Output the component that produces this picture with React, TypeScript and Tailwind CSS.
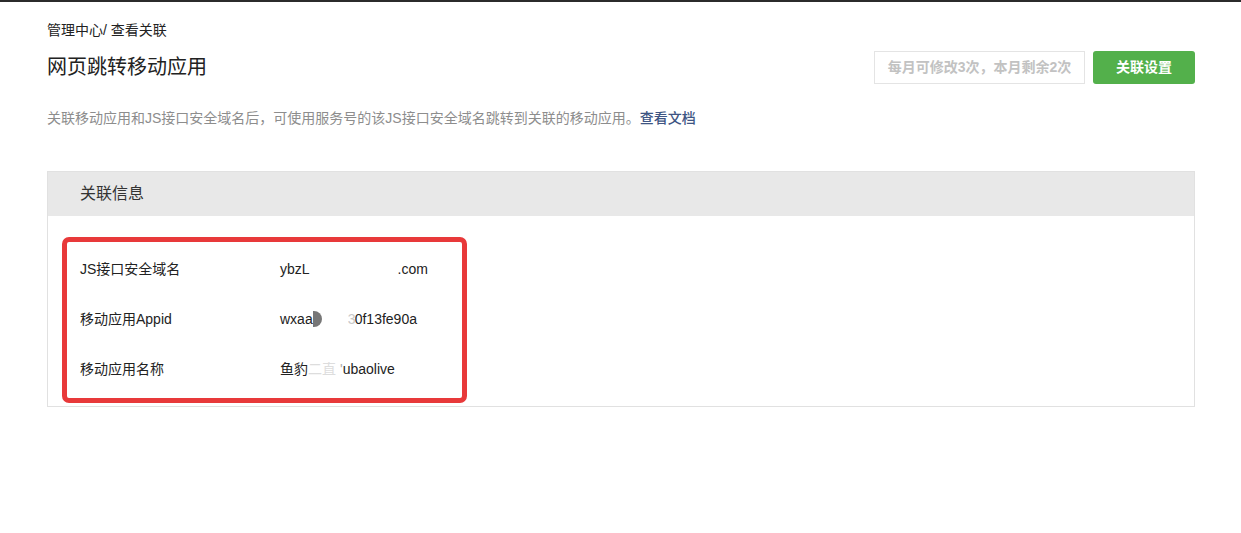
const rows = [
  { label: 'JS接口安全域名', value: 'domain' },
  { label: '移动应用Appid', value: 'appid' },
  { label: '移动应用名称', value: 'name' },
]

function Value({ kind }: { kind: string }) {
  if (kind === 'domain') {
    return (
      <span className="flex items-center">
        <span>ybzL</span>
        <span className="inline-block w-[88px]" />
        <span>.com</span>
      </span>
    )
  }
  if (kind === 'appid') {
    return (
      <span className="flex items-center">
        <span>wxaa</span>
        <span className="inline-block w-[9px] h-[16px] rounded-r-full bg-[#777]" />
        <span className="inline-block w-[26px]" />
        <span className="text-[#c8c8c8] w-[7px] overflow-hidden">3</span>
        <span>0f13fe90a</span>
      </span>
    )
  }
  return (
    <span className="flex items-center">
      <span>鱼豹</span>
      <span className="inline-block w-[28px] text-[#ddd] whitespace-nowrap">二直</span>
      <span className="inline-block w-[4px]" />
      <span className="text-[#aaa]">'</span>
      <span>ubaolive</span>
    </span>
  )
}

export default function App() {
  return (
    <div
      className="relative w-[1241px] h-[533px] bg-white border-t-2 border-[#2b2b2b] text-[#222]"
      style={{ fontFamily: "'Helvetica Neue', 'Liberation Sans', 'Noto Sans CJK SC', sans-serif" }}
    >
      <div className="pl-[47px] pr-[46px] pt-[18px]">
        <div className="text-[14px] leading-[20px] text-[#222]">管理中心/ 查看关联</div>

        <div className="flex items-start justify-between mt-[3px]">
          <h1 className="text-[20px] leading-[48px] text-[#222] font-normal">网页跳转移动应用</h1>
          <div className="flex items-center gap-2 pt-[8px]">
            <div className="h-[33px] w-[211px] border border-[#e4e4e4] flex items-center justify-center text-[14px] font-bold text-[#c2c2c2]">
              每月可修改3次，本月剩余2次
            </div>
            <button className="h-[33px] w-[102px] rounded-[3px] bg-[#53b04b] text-white text-[14px] font-bold">
              关联设置
            </button>
          </div>
        </div>

        <p className="mt-[17px] text-[14px] leading-[20px] text-[#8d8d8d]">
          关联移动应用和JS接口安全域名后，可使用服务号的该JS接口安全域名跳转到关联的移动应用。
          <a className="text-[#3e5583] font-medium">查看文档</a>
        </p>

        <div className="mt-[43px] border border-[#e1e1e1]">
          <div className="h-[44px] bg-[#e8e8e8] flex items-center pl-[32px] text-[16px] text-[#333]">关联信息</div>
          <div className="pt-[28px] pb-[12px]">
            {rows.map(r => (
              <div key={r.label} className="flex items-center h-[50px] pl-[32px] text-[14px] text-[#222]">
                <span className="w-[200px]">{r.label}</span>
                <Value kind={r.value} />
              </div>
            ))}
          </div>
        </div>
      </div>

      <div className="absolute left-[62px] top-[235px] w-[405px] h-[166px] border-[5px] border-[#e8393a] rounded-[7px] pointer-events-none" />
    </div>
  )
}
